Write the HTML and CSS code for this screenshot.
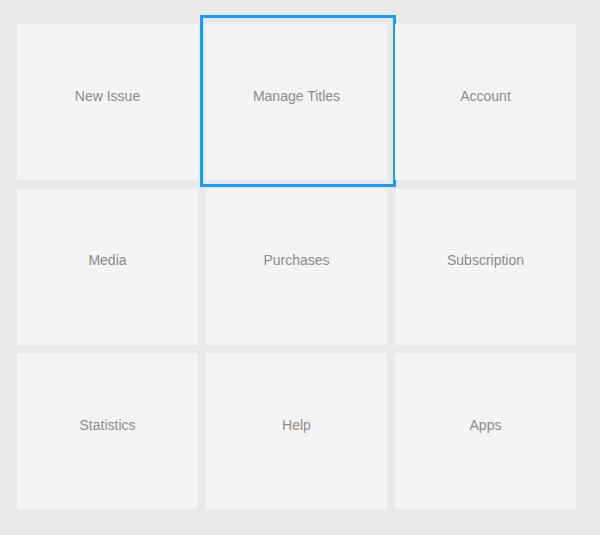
FILE: index.html
```html
<!DOCTYPE html>
<html lang="en">
   <head>
      <meta charset="utf-8">
      <title>Dashboard</title>
      <link rel="stylesheet" href="styles.css">
   </head>
   <body>
      <!-- Menu tiles -->
      <div class="tile-grid">
         <a class="tile" href="#">New Issue</a>
         <a class="tile tile-focus" href="#">Manage Titles</a>
         <a class="tile" href="#">Account</a>
         <a class="tile" href="#">Media</a>
         <a class="tile" href="#">Purchases</a>
         <a class="tile" href="#">Subscription</a>
         <a class="tile" href="#">Statistics</a>
         <a class="tile" href="#">Help</a>
         <a class="tile" href="#">Apps</a>
      </div>
   </body>
</html>
```

FILE: styles.css
```css
/* Global Styles */
body {
    font-family: "Liberation Sans", Arial, sans-serif;
    margin: 0;
    padding: 0;
    background-color: #e9e9e9;
    color: #8c8c8c;
}

/* Tile Grid */
.tile-grid {
    display: grid;
    grid-template-columns: repeat(3, 181px);
    grid-auto-rows: 156px;
    column-gap: 8px;
    row-gap: 8.5px;
    padding: 24px 0 0 17px;
}

.tile {
    position: relative;
    display: flex;
    align-items: center;
    justify-content: center;
    padding-bottom: 13px;
    background-color: #f4f4f4;
    color: #8c8c8c;
    font-size: 14px;
    text-decoration: none;
}

/* Selected tile outline */
.tile-focus::after {
    content: "";
    position: absolute;
    top: -9px;
    left: -6px;
    right: -9px;
    bottom: -7px;
    border: 3px solid #179bff;
}
```
